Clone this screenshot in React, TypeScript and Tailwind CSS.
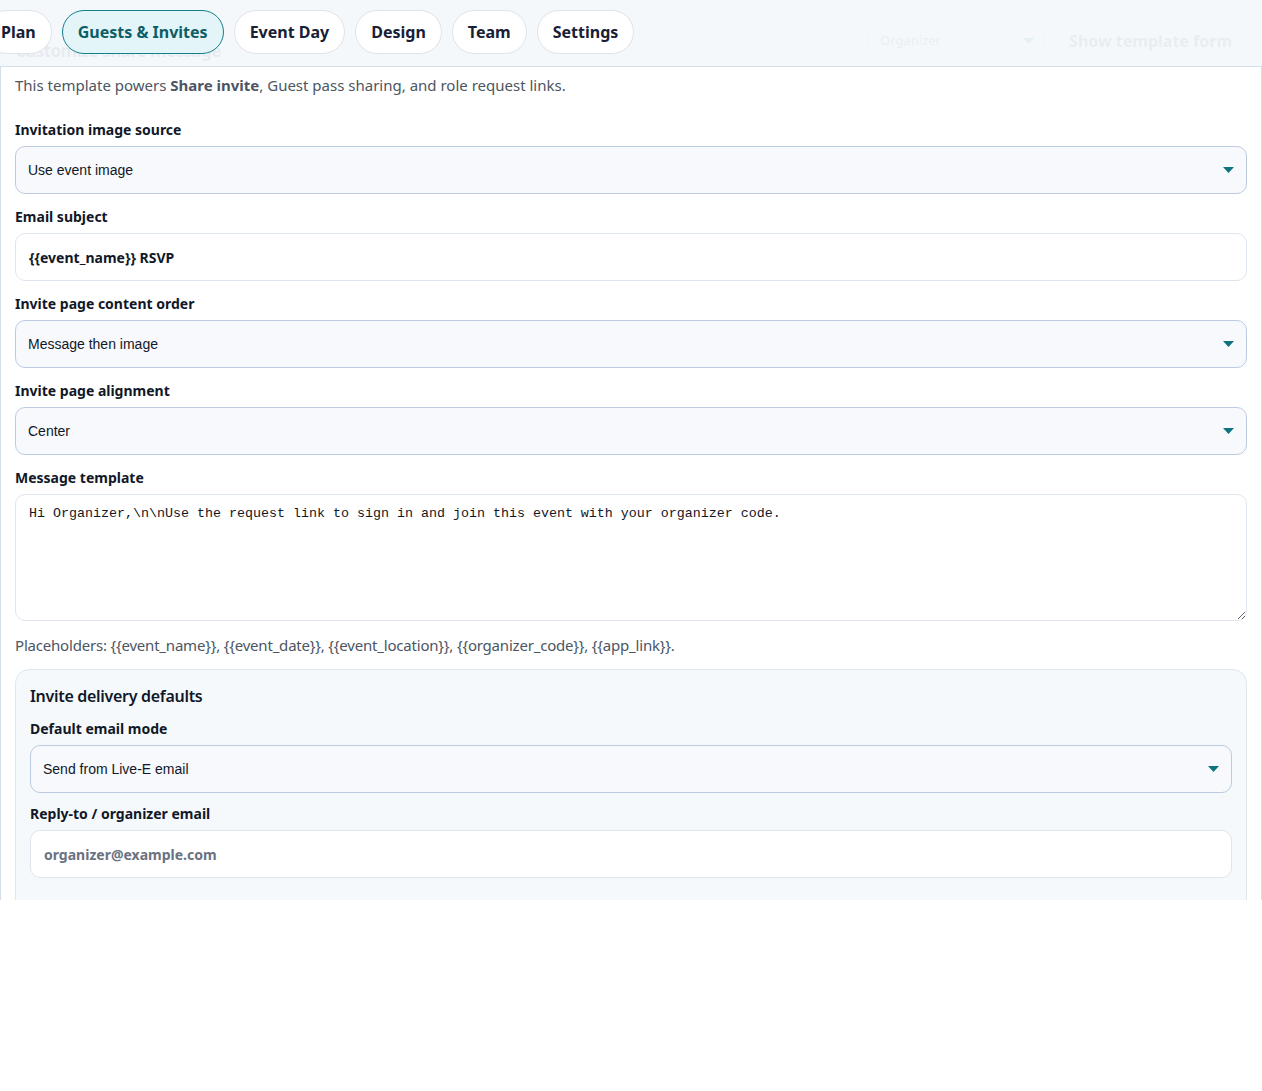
import React from "react";

const Caret = () => (
  <svg width="11" height="6" viewBox="0 0 11 6" className="shrink-0">
    <path d="M0 0 H11 L5.5 6 Z" fill="#0f7480" />
  </svg>
);

function Label({ children }: { children: React.ReactNode }) {
  return (
    <div className="h-5 leading-5 text-[14px] font-bold text-[#111827] mb-[6px]">{children}</div>
  );
}

function SelectBox({ value }: { value: string }) {
  return (
    <div className="h-12 rounded-[10px] border border-[#bccbe0] bg-[#f7f9fc] flex items-center justify-between pl-[12px] pr-[12px]">
      <span className="text-[14px] text-[#111827] font-['Liberation_Sans',Arial,sans-serif]">{value}</span>
      <Caret />
    </div>
  );
}

function InputBox({ value, placeholder }: { value?: string; placeholder?: string }) {
  return (
    <div className="h-12 rounded-[10px] border border-[#dfe5ee] bg-white flex items-center px-[13px]">
      {value ? (
        <span className="text-[14px] font-bold text-[#111827]">{value}</span>
      ) : (
        <span className="text-[14px] font-bold text-[#6b7280]">{placeholder}</span>
      )}
    </div>
  );
}

const tabs = ["Plan", "Guests & Invites", "Event Day", "Design", "Team", "Settings"];

export default function App() {
  return (
    <div className="relative h-[900px] overflow-hidden bg-white font-['Noto_Sans','Open_Sans',sans-serif]">
      {/* page content */}
      <div className="bg-[#f4f8fb]">
        <div className="flex justify-between h-[66px] pl-[15px] pr-[30px]">
          <div className="pt-[39px] leading-6 text-[17px] font-bold tracking-[-0.6px] text-[#1e293b] whitespace-nowrap">Customize share message</div>
          <div className="pt-[21px] flex items-start gap-[24px]">
            <div className="w-[178px] h-[39px] rounded-[10px] border border-[#cbd5e1] bg-white flex items-center justify-between pl-[12px] pr-[10px]">
              <span className="text-[13px] text-[#334155]">Organizer</span>
              <Caret />
            </div>
            <div className="h-[39px] flex items-center text-[16px] font-bold text-[#334155]">Show template form</div>
          </div>
        </div>
      </div>
      <div className="border border-[#d5dfe9] bg-white px-[14px] pt-[6px] pb-[40px]">
        <p className="text-[15px] leading-6 text-[#4b5563]">
          This template powers <span className="font-bold">Share invite</span>, Guest pass sharing, and role request links.
        </p>
        <div className="mt-[23px] flex flex-col gap-[13px]">
          <div>
            <Label>Invitation image source</Label>
            <SelectBox value="Use event image" />
          </div>
          <div>
            <Label>Email subject</Label>
            <InputBox value="{{event_name}} RSVP" />
          </div>
          <div>
            <Label>Invite page content order</Label>
            <SelectBox value="Message then image" />
          </div>
          <div>
            <Label>Invite page alignment</Label>
            <SelectBox value="Center" />
          </div>
          <div>
            <Label>Message template</Label>
            <textarea
              readOnly
              className="block w-full h-[127px] rounded-[10px] border border-[#dfe5ee] bg-white px-[13px] py-[9px] text-[13.333px] text-[#111827] font-['Liberation_Mono','Courier_New',monospace] outline-none"
              defaultValue={"Hi Organizer,\\n\\nUse the request link to sign in and join this event with your organizer code."}
            />
          </div>
        </div>
        <p className="mt-[12px] text-[15px] leading-6 tracking-[-0.2px] text-[#4b5563]">
          Placeholders: {"{{event_name}}"}, {"{{event_date}}"}, {"{{event_location}}"}, {"{{organizer_code}}"}, {"{{app_link}}"}.
        </p>
        <div className="mt-[12px] rounded-[14px] border border-[#dfe7ef] bg-[#f5f9fc] px-[14px] pt-[14px] pb-[60px]">
          <div className="text-[16px] leading-6 font-semibold tracking-[-0.3px] text-[#111827]">Invite delivery defaults</div>
          <div className="mt-[11px] flex flex-col gap-[11px]">
            <div>
              <Label>Default email mode</Label>
              <SelectBox value="Send from Live-E email" />
            </div>
            <div>
              <Label>Reply-to / organizer email</Label>
              <InputBox placeholder="organizer@example.com" />
            </div>
          </div>
        </div>
      </div>

      {/* sticky header overlay */}
      <div className="absolute top-0 left-0 right-0 h-[66px] bg-[#f4f8fb]/[0.94]">
        <div className="flex items-center gap-[10px] ml-[-15px] mt-[10px]">
          {tabs.map((t) => {
            const active = t === "Guests & Invites";
            return (
              <div
                key={t}
                className={
                  active
                    ? "h-[44px] px-[15px] rounded-full border border-[#14808a] bg-[#e3f5f8] text-[#0d5e66] flex items-center text-[16px] font-bold whitespace-nowrap"
                    : "h-[44px] px-[15px] rounded-full border border-[#dde4ec] bg-white text-[#172036] flex items-center text-[16px] font-bold whitespace-nowrap"
                }
              >
                {t}
              </div>
            );
          })}
        </div>
      </div>
    </div>
  );
}
